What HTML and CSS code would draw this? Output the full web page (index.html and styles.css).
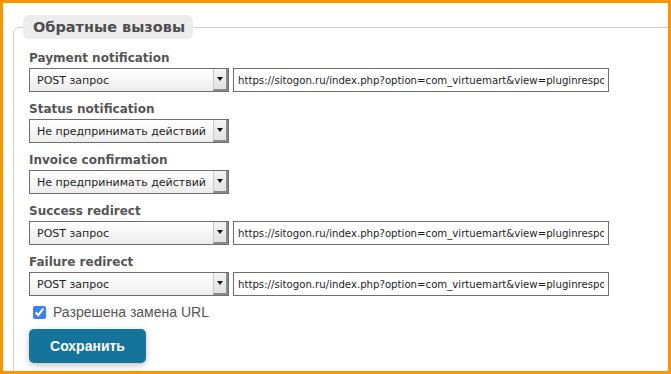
FILE: index.html
```html
<!DOCTYPE html>
<html lang="ru">
<head>
<meta charset="utf-8">
<title>Обратные вызовы</title>
<link rel="stylesheet" href="styles.css">
</head>
<body>
<div class="frame">
  <fieldset class="group">
    <legend class="group-title">Обратные вызовы</legend>
    <div class="group-body">
      <div class="row">
        <label class="row-label">Payment notification</label>
        <div class="controls">
          <div class="select"><select><option>POST запрос</option></select><span class="arrow"></span></div>
          <input class="url" type="text" value="https://sitogon.ru/index.php?option=com_virtuemart&amp;view=pluginresponse&amp;task=pluginnotification">
        </div>
      </div>
      <div class="row">
        <label class="row-label">Status notification</label>
        <div class="controls">
          <div class="select"><select><option>Не предпринимать действий</option></select><span class="arrow"></span></div>
        </div>
      </div>
      <div class="row">
        <label class="row-label">Invoice confirmation</label>
        <div class="controls">
          <div class="select"><select><option>Не предпринимать действий</option></select><span class="arrow"></span></div>
        </div>
      </div>
      <div class="row">
        <label class="row-label">Success redirect</label>
        <div class="controls">
          <div class="select"><select><option>POST запрос</option></select><span class="arrow"></span></div>
          <input class="url" type="text" value="https://sitogon.ru/index.php?option=com_virtuemart&amp;view=pluginresponse&amp;task=pluginresponsereceived">
        </div>
      </div>
      <div class="row">
        <label class="row-label">Failure redirect</label>
        <div class="controls">
          <div class="select"><select><option>POST запрос</option></select><span class="arrow"></span></div>
          <input class="url" type="text" value="https://sitogon.ru/index.php?option=com_virtuemart&amp;view=pluginresponse&amp;task=pluginUserPaymentCancel">
        </div>
      </div>
      <label class="check"><input type="checkbox" checked><span>Разрешена замена URL</span></label>
      <button class="save" type="button">Сохранить</button>
    </div>
  </fieldset>
</div>
</body>
</html>
```

FILE: styles.css
```css
html, body {
  margin: 0;
  padding: 0;
  background: #fff;
}

.frame {
  box-sizing: border-box;
  width: 671px;
  height: 374px;
  border: 3px solid #fb9500;
  overflow: hidden;
  padding: 0 0 0 10px;
  background: #fff;
}

.group {
  box-sizing: border-box;
  width: 700px;
  min-height: 400px;
  margin: 12px 0 0 0;
  padding: 0 0 0 9px;
  border: 1px solid #cfcfcf;
  border-radius: 6px 0 0 0;
}

.group-title {
  box-sizing: border-box;
  width: 170px;
  height: 24px;
  padding: 0 0 0 10px;
  background: #ececec;
  border-radius: 6px;
  font-family: "DejaVu Sans", Verdana, sans-serif;
  font-weight: bold;
  font-size: 14.5px;
  line-height: 24px;
  color: #4e4e4e;
}

.group-body {
  padding: 10px 0 0 6px;
}

.row {
  display: flex;
  flex-direction: column;
  gap: 1px;
  margin-bottom: 8px;
}

.row-label {
  font-family: "DejaVu Sans", Verdana, sans-serif;
  font-weight: bold;
  font-size: 12px;
  line-height: 18px;
  color: #555;
}

.controls {
  display: flex;
  gap: 4px;
  height: 24px;
}

.select {
  box-sizing: border-box;
  display: flex;
  width: 200px;
  height: 24px;
  border: 1px solid #6e6e6e;
  background: linear-gradient(#ffffff, #ededed);
}

.select select {
  flex: 1;
  min-width: 0;
  -webkit-appearance: none;
  appearance: none;
  border: 0;
  margin: 0;
  padding: 0 0 0 7px;
  background: transparent;
  font-family: "DejaVu Sans", Verdana, sans-serif;
  font-size: 11px;
  color: #1e1e1e;
  outline: none;
}

.arrow {
  position: relative;
  box-sizing: border-box;
  width: 15px;
  height: 22px;
  background: linear-gradient(#f4f4f4, #e2e2e2);
  border-left: 1px solid #c8c8c8;
  border-right: 2px solid #8a8a8a;
  border-bottom: 2px solid #8a8a8a;
}

.arrow::after {
  content: "";
  position: absolute;
  left: 3px;
  top: 8px;
  border-left: 3px solid transparent;
  border-right: 3px solid transparent;
  border-top: 4px solid #111;
}

.url {
  box-sizing: border-box;
  width: 376px;
  height: 24px;
  margin: 0;
  padding: 0 4px;
  border: 1px solid #6e6e6e;
  background: #fff;
  font-family: "DejaVu Sans Condensed", "DejaVu Sans", sans-serif;
  font-size: 11.3px;
  color: #1e1e1e;
  outline: none;
}

.check {
  display: flex;
  align-items: center;
  gap: 7px;
  height: 16px;
  margin: 7px 0 0 4px;
  font-family: "Liberation Sans", Arial, sans-serif;
  font-size: 14px;
  color: #555;
}

.check input {
  width: 13px;
  height: 13px;
  margin: 0;
  accent-color: #3b82f0;
}

.save {
  display: block;
  width: 117px;
  height: 34px;
  margin: 9px 0 0 0;
  padding: 0;
  border: 0;
  border-radius: 5px;
  background: #16739a;
  color: #fff;
  font-family: "Liberation Sans", Arial, sans-serif;
  font-weight: bold;
  font-size: 14px;
  box-shadow: 0 2px 6px rgba(0, 0, 0, 0.25);
}
```
